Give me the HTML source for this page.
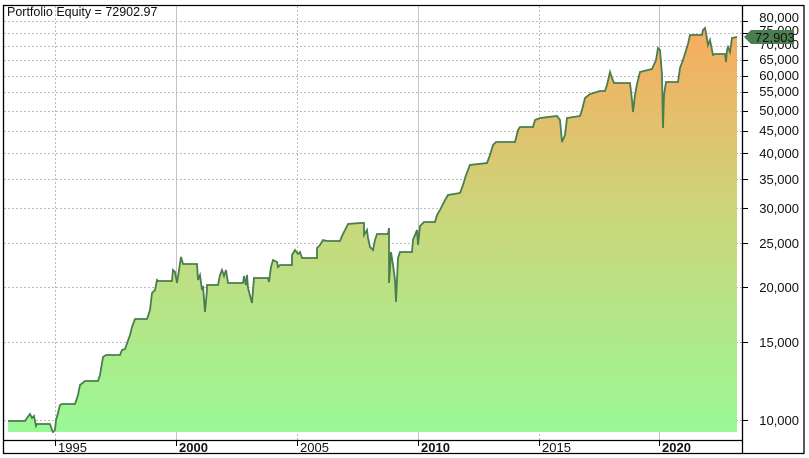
<!DOCTYPE html>
<html><head><meta charset="utf-8"><style>
html,body{margin:0;padding:0;background:#fff;width:809px;height:458px;overflow:hidden}
svg{display:block;font-family:"Liberation Sans",sans-serif}
</style></head><body>
<svg width="809" height="458" viewBox="0 0 809 458">
<defs>
<linearGradient id="g" x1="0" y1="30" x2="0" y2="432" gradientUnits="userSpaceOnUse">
<stop offset="0" stop-color="#f8ab5e"/>
<stop offset="0.45" stop-color="#ccd57a"/>
<stop offset="1" stop-color="#9af896"/>
</linearGradient>
</defs>
<rect x="0" y="0" width="809" height="458" fill="#fff"/>
<g stroke="#bbb" stroke-dasharray="2,2" stroke-width="1">
<line x1="4" y1="21.5" x2="742" y2="21.5"/>
<line x1="4" y1="33.5" x2="742" y2="33.5"/>
<line x1="4" y1="46.5" x2="742" y2="46.5"/>
<line x1="4" y1="60.5" x2="742" y2="60.5"/>
<line x1="4" y1="76.5" x2="742" y2="76.5"/>
<line x1="4" y1="92.5" x2="742" y2="92.5"/>
<line x1="4" y1="111.5" x2="742" y2="111.5"/>
<line x1="4" y1="131.5" x2="742" y2="131.5"/>
<line x1="4" y1="153.5" x2="742" y2="153.5"/>
<line x1="4" y1="179.5" x2="742" y2="179.5"/>
<line x1="4" y1="208.5" x2="742" y2="208.5"/>
<line x1="4" y1="243.5" x2="742" y2="243.5"/>
<line x1="4" y1="287.5" x2="742" y2="287.5"/>
<line x1="4" y1="342.5" x2="742" y2="342.5"/>
<line x1="4" y1="420.5" x2="742" y2="420.5"/>
<line x1="55.5" y1="6" x2="55.5" y2="440"/>
<line x1="297.5" y1="6" x2="297.5" y2="440"/>
<line x1="539.5" y1="6" x2="539.5" y2="440"/>
</g>
<g stroke="#c4c4c4" stroke-width="1">
<line x1="176.5" y1="6" x2="176.5" y2="440"/>
<line x1="418.5" y1="6" x2="418.5" y2="440"/>
<line x1="659.5" y1="6" x2="659.5" y2="440"/>
</g>
<path fill="url(#g)" stroke="none" d="M8,421 L25,421 27,418 30,414 32,418 34,416 36,426 37,424 50,424 52,430 53,432 55,430 56,420 58,413 60,405 62,404 75,404 78,395 80,385 85,381 98,381 100,375 103,357 106,355 120,355 122,350 125,349 130,335 132,327 135,319 147,319 150,310 152,293 155,290 157,280 158,281 172,281 173,270 175,272 177,283 179,270 181,257 183,264 197,264 198,280 200,275 202,290 203,286 205,312 207,290 207,285 218,285 220,275 222,270 224,276 226,270 228,283 243,283 244,276 246,285 247,275 248,288 252,303 254,278 268,278 269,282 271,267 273,260 277,262 278,267 280,265 292,265 292,255 295,250 298,254 300,252 302,258 317,258 317,248 320,245 323,240 327,241 340,241 342,236 345,230 348,224 360,223 364,223 364,235 367,230 368,238 370,247 373,250 375,240 377,234 388,234 389,228 389,283 391,252 393,265 395,280 396,302 397,280 398,258 400,252 412,252 413,240 415,235 417,230 418,245 420,226 424,222 435,222 437,215 440,210 445,200 448,195 460,193 463,185 466,175 470,165 487,163 490,155 493,145 496,142 515,142 518,130 520,127 533,127 535,120 540,118 557,116 560,120 562,142 565,135 567,118 580,116 582,110 585,98 590,94 600,91 605,91 607,85 610,72 612,78 614,83 630,83 632,100 633,112 635,95 637,84 640,72 652,69 656,60 658,48 660,50 662,75 663,128 664,95 666,82 678,82 680,68 683,60 688,44 690,35 702,35 703,30 705,28 706,33 708,45 710,40 712,50 713,55 715,54 725,54 726,62 727,50 728,47 730,52 732,38 737,37 L737,432 L8,432 Z"/>
<path fill="none" stroke="#4a7d4f" stroke-width="1.8" stroke-linejoin="miter" d="M8,421 L25,421 27,418 30,414 32,418 34,416 36,426 37,424 50,424 52,430 53,432 55,430 56,420 58,413 60,405 62,404 75,404 78,395 80,385 85,381 98,381 100,375 103,357 106,355 120,355 122,350 125,349 130,335 132,327 135,319 147,319 150,310 152,293 155,290 157,280 158,281 172,281 173,270 175,272 177,283 179,270 181,257 183,264 197,264 198,280 200,275 202,290 203,286 205,312 207,290 207,285 218,285 220,275 222,270 224,276 226,270 228,283 243,283 244,276 246,285 247,275 248,288 252,303 254,278 268,278 269,282 271,267 273,260 277,262 278,267 280,265 292,265 292,255 295,250 298,254 300,252 302,258 317,258 317,248 320,245 323,240 327,241 340,241 342,236 345,230 348,224 360,223 364,223 364,235 367,230 368,238 370,247 373,250 375,240 377,234 388,234 389,228 389,283 391,252 393,265 395,280 396,302 397,280 398,258 400,252 412,252 413,240 415,235 417,230 418,245 420,226 424,222 435,222 437,215 440,210 445,200 448,195 460,193 463,185 466,175 470,165 487,163 490,155 493,145 496,142 515,142 518,130 520,127 533,127 535,120 540,118 557,116 560,120 562,142 565,135 567,118 580,116 582,110 585,98 590,94 600,91 605,91 607,85 610,72 612,78 614,83 630,83 632,100 633,112 635,95 637,84 640,72 652,69 656,60 658,48 660,50 662,75 663,128 664,95 666,82 678,82 680,68 683,60 688,44 690,35 702,35 703,30 705,28 706,33 708,45 710,40 712,50 713,55 715,54 725,54 726,62 727,50 728,47 730,52 732,38 737,37"/>
<g stroke="#000" stroke-width="1.3" fill="none">
<line x1="3.5" y1="5" x2="3.5" y2="454"/>
<line x1="3" y1="453.5" x2="804" y2="453.5"/>
<line x1="804" y1="5" x2="804" y2="454"/>
<line x1="742.5" y1="5" x2="742.5" y2="454"/>
<line x1="3" y1="440.5" x2="742" y2="440.5"/>
<line x1="3" y1="5.5" x2="804" y2="5.5"/>
</g>
<g stroke="#000" stroke-width="1">
<line x1="743" y1="21.5" x2="748" y2="21.5"/><line x1="743" y1="33.5" x2="748" y2="33.5"/><line x1="743" y1="46.5" x2="748" y2="46.5"/><line x1="743" y1="60.5" x2="748" y2="60.5"/><line x1="743" y1="76.5" x2="748" y2="76.5"/><line x1="743" y1="92.5" x2="748" y2="92.5"/><line x1="743" y1="111.5" x2="748" y2="111.5"/><line x1="743" y1="131.5" x2="748" y2="131.5"/><line x1="743" y1="153.5" x2="748" y2="153.5"/><line x1="743" y1="179.5" x2="748" y2="179.5"/><line x1="743" y1="208.5" x2="748" y2="208.5"/><line x1="743" y1="243.5" x2="748" y2="243.5"/><line x1="743" y1="287.5" x2="748" y2="287.5"/><line x1="743" y1="342.5" x2="748" y2="342.5"/><line x1="743" y1="420.5" x2="748" y2="420.5"/>
<line x1="55.5" y1="441" x2="55.5" y2="446"/><line x1="176.5" y1="441" x2="176.5" y2="446"/><line x1="297.5" y1="441" x2="297.5" y2="446"/><line x1="418.5" y1="441" x2="418.5" y2="446"/><line x1="539.5" y1="441" x2="539.5" y2="446"/><line x1="659.5" y1="441" x2="659.5" y2="446"/>
</g>
<g font-size="13" fill="#111" text-anchor="end">
<text x="799" y="22">80,000</text><text x="799" y="35">75,000</text><text x="799" y="49">70,000</text><text x="799" y="64">65,000</text><text x="799" y="80">60,000</text><text x="799" y="96">55,000</text><text x="799" y="115">50,000</text><text x="799" y="135">45,000</text>
<text x="799" y="158">40,000</text><text x="799" y="184">35,000</text><text x="799" y="213">30,000</text><text x="799" y="248">25,000</text><text x="799" y="292">20,000</text><text x="799" y="347">15,000</text><text x="799" y="425">10,000</text>
</g>
<g font-size="13" fill="#111">
<text x="58" y="452">1995</text><text x="179" y="452" font-weight="bold">2000</text><text x="300" y="452">2005</text><text x="421" y="452" font-weight="bold">2010</text><text x="542" y="452">2015</text><text x="662" y="452" font-weight="bold">2020</text>
</g>
<polygon points="744,37 751,30 794,30 794,44 751,44" fill="#4a7d4f"/>
<text x="755" y="42" font-size="13" fill="#111">72,903</text>
<text x="7" y="16" font-size="12.5" fill="#111">Portfolio Equity = 72902.97</text>
</svg>
</body></html>
